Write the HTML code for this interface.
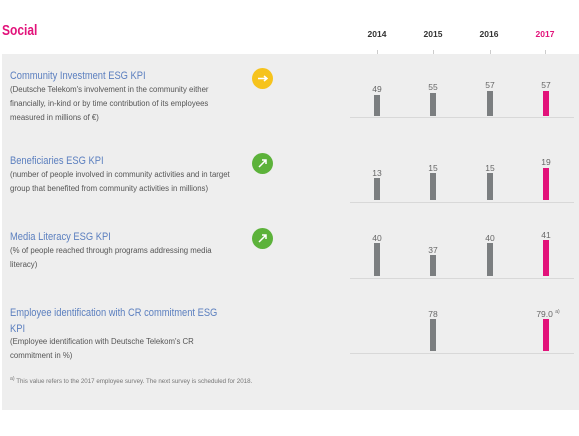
<!DOCTYPE html>
<html><head><style>
body{margin:0;width:579px;height:436px;background:#fff;position:relative;overflow:hidden;font-family:"Liberation Sans",sans-serif}
.a{position:absolute}
.panel{left:2px;top:54px;width:577px;height:356px;background:#eeeeee}
.t{color:#5b7fbf;font-size:11px;left:10px;transform:scaleX(0.85);transform-origin:0 0;white-space:nowrap}
.d{color:#555;font-size:7.8px;line-height:14px;left:10px}
.y{font-size:8.5px;font-weight:bold;color:#333;top:29px;width:40px;text-align:center}
.b{width:6px;background:#7b7e80}
.p{background:#e2127a}
.v{font-size:8.5px;color:#666;width:40px;text-align:center}
.bl{height:1px;background:#d8d8d8;left:350px;width:224px}
.ic{width:21px;height:21px;border-radius:50%;left:252px}
.tk{width:1px;height:5px;background:#ccc;top:50px}
</style></head><body>
<div class="a" style="left:2px;top:22px;color:#e2127a;font-size:15px;font-weight:bold;transform:scaleX(0.8);transform-origin:0 0">Social</div>
<div class="a y" style="left:357px">2014</div>
<div class="a y" style="left:413px">2015</div>
<div class="a y" style="left:469px">2016</div>
<div class="a y" style="left:525px;color:#e2127a">2017</div>
<div class="a tk" style="left:377px"></div><div class="a tk" style="left:433px"></div><div class="a tk" style="left:490px"></div><div class="a tk" style="left:545px"></div>
<div class="a panel"></div>

<div class="a t" style="top:70px">Community Investment ESG KPI</div>
<div class="a d" style="top:83px">(Deutsche Telekom's involvement in the community either<br>financially, in-kind or by time contribution of its employees<br>measured in millions of €)</div>
<div class="a ic" style="top:68px;background:#f6c31c"><svg width="21" height="21"><path d="M6 10.5h9M12 8l3 2.5-3 2.5" stroke="#fff" stroke-width="1.5" fill="none"/></svg></div>

<div class="a t" style="top:155px">Beneficiaries ESG KPI</div>
<div class="a d" style="top:168px">(number of people involved in community activities and in target<br>group that benefited from community activities in millions)</div>
<div class="a ic" style="top:153px;background:#5cb23a"><svg width="21" height="21"><path d="M7 14l7-7M10 7h4v4" stroke="#fff" stroke-width="1.5" fill="none"/></svg></div>

<div class="a t" style="top:231px">Media Literacy ESG KPI</div>
<div class="a d" style="top:244px">(% of people reached through programs addressing media<br>literacy)</div>
<div class="a ic" style="top:228px;background:#5cb23a"><svg width="21" height="21"><path d="M7 14l7-7M10 7h4v4" stroke="#fff" stroke-width="1.5" fill="none"/></svg></div>

<div class="a t" style="top:305px;line-height:16px">Employee identification with CR commitment ESG<br>KPI</div>
<div class="a d" style="top:335px">(Employee identification with Deutsche Telekom's CR<br>commitment in %)</div>
<div class="a" style="left:10px;top:376px;font-size:6.2px;color:#777"><sup>a)</sup> This value refers to the 2017 employee survey. The next survey is scheduled for 2018.</div>

<!-- row1 -->
<div class="a bl" style="top:117px"></div>
<div class="a b" style="left:374px;top:95px;height:21px"></div><div class="a v" style="left:357px;top:84px">49</div>
<div class="a b" style="left:430px;top:93px;height:23px"></div><div class="a v" style="left:413px;top:82px">55</div>
<div class="a b" style="left:487px;top:91px;height:25px"></div><div class="a v" style="left:470px;top:80px">57</div>
<div class="a b p" style="left:543px;top:91px;height:25px"></div><div class="a v" style="left:526px;top:80px">57</div>
<!-- row2 -->
<div class="a bl" style="top:202px"></div>
<div class="a b" style="left:374px;top:178px;height:22px"></div><div class="a v" style="left:357px;top:168px">13</div>
<div class="a b" style="left:430px;top:173px;height:27px"></div><div class="a v" style="left:413px;top:163px">15</div>
<div class="a b" style="left:487px;top:173px;height:27px"></div><div class="a v" style="left:470px;top:163px">15</div>
<div class="a b p" style="left:543px;top:168px;height:32px"></div><div class="a v" style="left:526px;top:157px">19</div>
<!-- row3 -->
<div class="a bl" style="top:278px"></div>
<div class="a b" style="left:374px;top:243px;height:33px"></div><div class="a v" style="left:357px;top:233px">40</div>
<div class="a b" style="left:430px;top:255px;height:21px"></div><div class="a v" style="left:413px;top:245px">37</div>
<div class="a b" style="left:487px;top:243px;height:33px"></div><div class="a v" style="left:470px;top:233px">40</div>
<div class="a b p" style="left:543px;top:240px;height:36px"></div><div class="a v" style="left:526px;top:230px">41</div>
<!-- row4 -->
<div class="a bl" style="top:353px"></div>
<div class="a b" style="left:430px;top:319px;height:32px"></div><div class="a v" style="left:413px;top:309px">78</div>
<div class="a b p" style="left:543px;top:319px;height:32px"></div><div class="a v" style="left:528px;top:309px">79.0 <sup style="font-size:5px">a)</sup></div>
</body></html>
